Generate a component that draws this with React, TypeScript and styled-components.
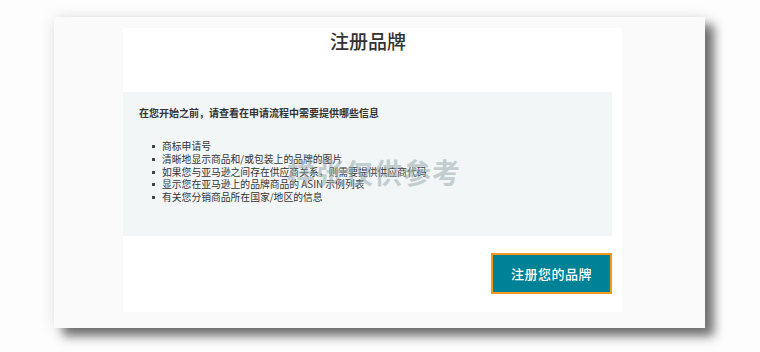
import React from 'react';
import styled, { createGlobalStyle } from 'styled-components';

const GlobalStyle = createGlobalStyle`
  html, body {
    margin: 0;
    padding: 0;
    background: #fdfdfd;
    font-family: "Noto Sans CJK SC", "Noto Sans", sans-serif;
  }
`;

const Page = styled.div`
  width: 760px;
  height: 352px;
  padding: 17px 0 0 54px;
  box-sizing: border-box;
`;

const Card = styled.div`
  width: 651px;
  height: 311px;
  box-sizing: border-box;
  padding: 11px 83px 16px 69px;
  background: #fafafa;
  box-shadow: 0 0 14px rgba(0, 0, 0, 0.1), 9px 8px 10px rgba(0, 0, 0, 0.55);
`;

const Panel = styled.div`
  height: 100%;
  background: #ffffff;
  display: flex;
  flex-direction: column;
`;

const Title = styled.h2`
  margin: 0;
  height: 64px;
  padding: 1px 9px 0 0;
  box-sizing: border-box;
  text-align: center;
  font-size: 19px;
  line-height: 24px;
  font-weight: 500;
  color: #333;
`;

const InfoBox = styled.div`
  position: relative;
  width: 489px;
  height: 144px;
  box-sizing: border-box;
  padding: 14px 16px 0;
  background: #f3f6f7;
  color: #333;
`;

const InfoHeading = styled.p`
  margin: 0 0 20px;
  font-size: 10px;
  line-height: 14px;
  font-weight: 700;
`;

const List = styled.ul`
  margin: 0;
  padding: 0 0 0 13px;
  list-style: none;
`;

const Item = styled.li`
  position: relative;
  padding-left: 10px;
  font-size: 9.8px;
  line-height: 12.8px;
  color: #333;

  &::before {
    content: '';
    position: absolute;
    left: 0;
    top: 5px;
    width: 3px;
    height: 3px;
    background: #444;
  }
`;

const Watermark = styled.div`
  position: absolute;
  left: 164px;
  top: 60px;
  font-size: 28px;
  font-weight: 700;
  letter-spacing: 1px;
  color: rgba(150, 170, 172, 0.55);
  pointer-events: none;
  white-space: nowrap;
`;

const Actions = styled.div`
  display: flex;
  justify-content: flex-end;
  padding: 17px 10px 0 0;
`;

const PrimaryButton = styled.button`
  width: 121px;
  height: 41px;
  background: #008296;
  border: 2px solid #f39a1e;
  color: #ffffff;
  font-family: "Noto Sans CJK SC", sans-serif;
  font-size: 13px;
  font-weight: 500;
  letter-spacing: 0.5px;
  cursor: pointer;
`;

const items = [
  '商标申请号',
  '清晰地显示商品和/或包装上的品牌的图片',
  '如果您与亚马逊之间存在供应商关系，则需要提供供应商代码',
  '显示您在亚马逊上的品牌商品的 ASIN 示例列表',
  '有关您分销商品所在国家/地区的信息',
];

const App: React.FC = () => {
  return (
    <>
      <GlobalStyle />
      <Page>
        <Card>
          <Panel>
            <Title>注册品牌</Title>
            <InfoBox>
              <InfoHeading>在您开始之前，请查看在申请流程中需要提供哪些信息</InfoHeading>
              <List>
                {items.map((text) => (
                  <Item key={text}>{text}</Item>
                ))}
              </List>
              <Watermark>样张仅供参考</Watermark>
            </InfoBox>
            <Actions>
              <PrimaryButton>注册您的品牌</PrimaryButton>
            </Actions>
          </Panel>
        </Card>
      </Page>
    </>
  );
};

export default App;
